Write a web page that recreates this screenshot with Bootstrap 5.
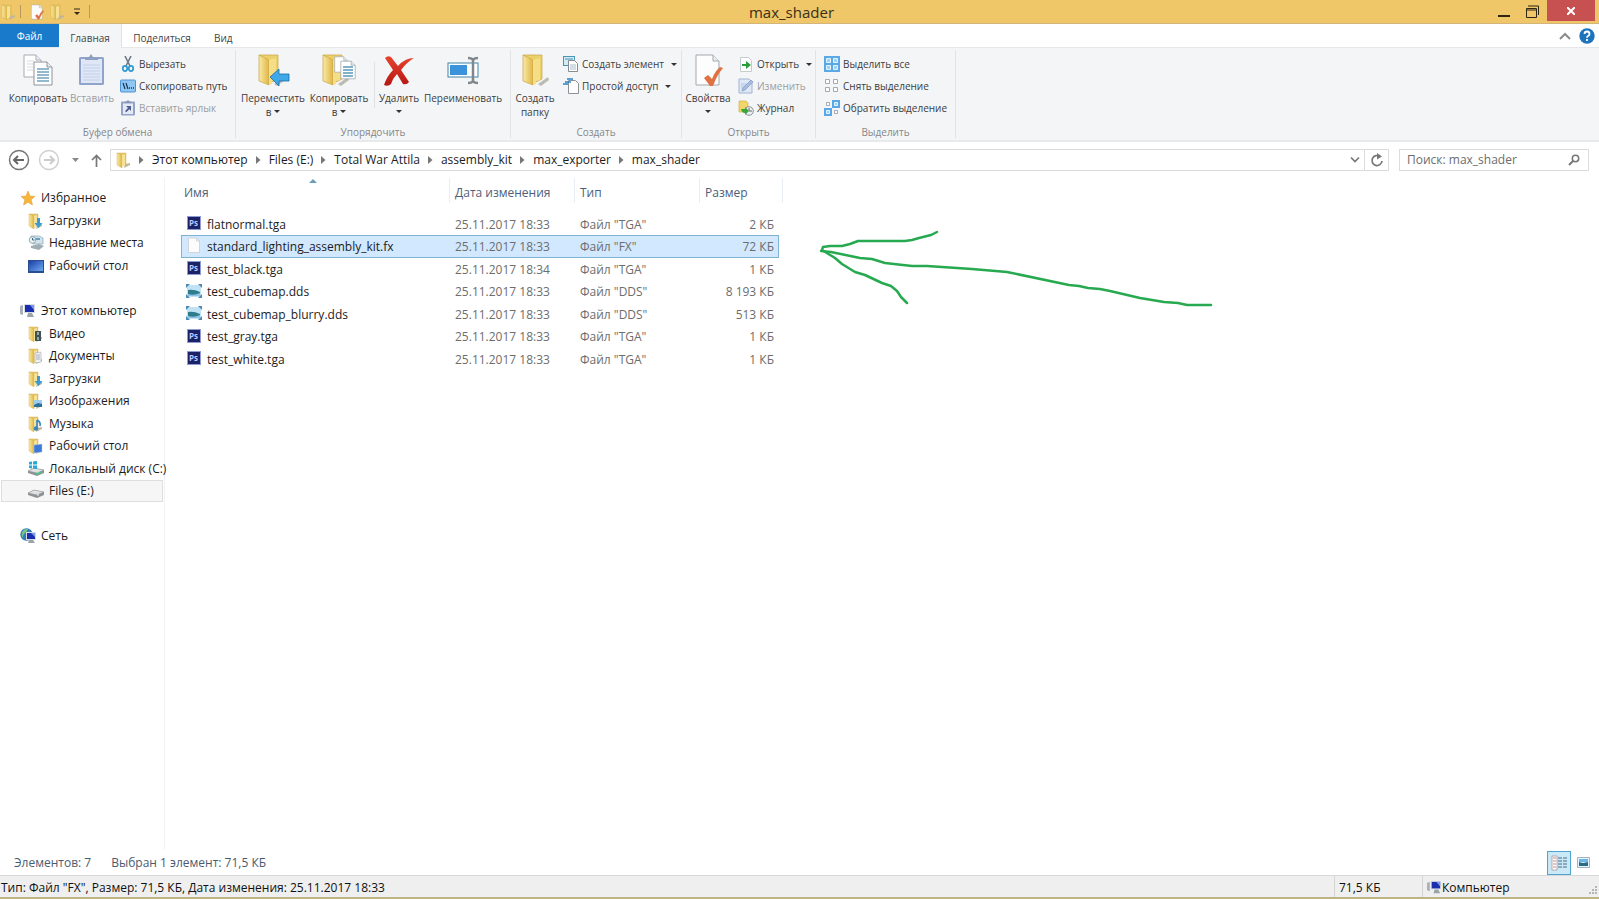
<!DOCTYPE html>
<html lang="ru">
<head>
<meta charset="utf-8">
<meta name="viewport" content="width=device-width, initial-scale=1">
<title>max_shader</title>
<link href="https://cdn.jsdelivr.net/npm/bootstrap@5.3.0/dist/css/bootstrap.min.css" rel="stylesheet">
<style>
body{font-family:"Open Sans","Noto Sans",sans-serif;font-size:12px;line-height:16px;color:#1c1c1c;background:#fff}
button{font-family:inherit}
a{color:inherit;text-decoration:none}
svg{flex:none;display:block}
.i16{width:16px;height:16px}
.i32{width:34px;height:34px}
.titlebar{height:24px;background:#efc768;border-bottom:1px solid #d3b47a}
.titlebar h1{font-size:15px;line-height:24px;color:#3a2f18;margin:0 16px 0 0}
.side{flex:1 1 0}
.qsep{width:1px;height:13px;background:#b79a5b}
.plain{border:0;background:none;padding:0;color:inherit}
.closebtn{width:48px;height:21px;background:#c75050}
.tabs{height:23px}
.tabs a{line-height:22px;font-size:10px;text-align:center;color:#444;padding-top:3px;height:24px}
.tabs .file{width:59px;background:#1979ca;color:#fff;padding-top:1px;height:23px}
.tabs .main{width:63px;background:#f4f5f7;border-right:1px solid #e2e3e5;position:relative}
.ribbon{height:95px;background:#f4f5f7;border-top:1px solid #e6e7e9;border-bottom:2px solid #e8e9eb;font-size:10px;color:#3c3c3c}
.grp{border-right:1px solid #e2e3e5;margin-top:2px;margin-bottom:2px}
.g1{width:236px}.g2{width:275px}.g3{width:171px}.g4{width:134px}.g5{width:140px}
.grp .tools{height:75px;padding-top:3px}
.grp .cap{text-align:center;color:#85878a;line-height:14px}
.big{display:flex;flex-direction:column;align-items:center;line-height:14px;white-space:nowrap}
.big span{margin-top:4px}
.w60{width:60px}.w48{width:48px}.w52{width:52px}.w66{width:66px}.w80{width:80px}
.small-col button{display:flex;align-items:center;height:22px;gap:3px;white-space:nowrap}
.off{color:#9b9da0}
.caret{display:inline-block;border:3px solid transparent;border-top-color:#333;border-bottom:0;vertical-align:3px}
.isep{width:1px;height:46px;background:#e0e1e3;margin:9px 0 0 2px}
.nav-row{height:36px;padding:7px 10px 7px 8px}
.crumbs{height:22px;border:1px solid #dcdcdc}
.crumbs ol{list-style:none}
.refresh{width:24px;border-left:1px solid #dcdcdc;height:20px}
.search{width:190px;height:22px;border:1px solid #dcdcdc;margin-left:10px}
.search input{border:0;outline:0;width:140px;padding:0 0 0 7px;color:#6d6d6d;background:none}
.search input::placeholder{color:#6d6d6d;opacity:1}
.tree{width:165px;border-right:1px solid #f2f2f2;padding-top:9px}
.tree ul{list-style:none;margin:0 0 23px;padding:0}
.tree li,.files tbody tr{height:22px}
.tree li:nth-child(even),.files tbody tr:nth-child(even){height:23px}
.tree a{display:flex;align-items:center;height:100%;gap:5px;padding-left:26px;white-space:nowrap;margin:0 1px;border:1px solid transparent}
.tree a.root{padding-left:18px}
.tree a.cur{background:#f6f6f6;border-color:#dedede}
.pane{position:relative}
.files{table-layout:fixed;width:598px;margin-left:16px;border-collapse:separate;border-spacing:0}
.c-name{width:268px}.c-mid{width:125px}.c-size{width:80px}
.files th{font-weight:400;color:#4c607a;height:25px;padding:4px 0 0 5px;position:relative;border-left:1px solid #e8eef3;line-height:16px}
.files th:first-child{border-left:0;padding-left:3px}
.files thead::after{content:"";display:block;height:10px}
.files th:last-child::after{content:"";position:absolute;right:-4px;top:0;bottom:0;border-right:1px solid #e8eef3}
.files td{padding:1px 0 0 6px;color:#6d6d6d;white-space:nowrap;line-height:16px;vertical-align:middle}
.files td:first-child{padding-left:5px;color:#1c1c1c}
.files td:last-child{padding:1px 5px 0 0;text-align:right}
.files td svg{margin:0 5px 3px 0}
.files .sel td{background:#d1e8ff;border-top:1px solid #7fb3d3;border-bottom:1px solid #7fb3d3}
.files .sel td:first-child{border-left:1px solid #7fb3d3;padding-left:4px}
.files .sel td:last-child{border-right:1px solid #7fb3d3;padding-right:4px}
.files .sel td{padding-top:0}
.sortmark{position:absolute;left:128px;top:1px;border:4px solid transparent;border-bottom-color:#6c9db8;border-top:0}
.arrow{position:absolute;left:635px;top:42px}
.info{height:25px;color:#4a5b70;padding-left:14px}
.viewbtn{width:24px;height:24px}
.viewbtn.on{background:#cbe8f6;border:1px solid #4fa3cf}
.statusbar{height:22px;background:#efefef;border-top:1px solid #d8d8d8;color:#111;padding-left:1px}
.cell{border-left:1px solid #d5d5d5;padding-left:4px}
.cell-size{width:88px}.cell-zone{width:177px}
.task{height:2px;background:#bdb384}
</style>
</head>
<body class="d-flex flex-column vh-100 overflow-hidden">
<svg width="0" height="0" class="position-absolute" aria-hidden="true">
<defs>
<linearGradient id="gy"><stop offset="0" stop-color="#fbeaa2"/><stop offset="1" stop-color="#dfb548"/></linearGradient>
<linearGradient id="gb" x2="1" y2="1"><stop offset="0" stop-color="#1b3fa8"/><stop offset="1" stop-color="#6fa8f0"/></linearGradient>
<linearGradient id="gr" y2="1" x2="0"><stop offset="0" stop-color="#e8432d"/><stop offset="1" stop-color="#b51712"/></linearGradient>
<symbol id="folder" viewBox="0 0 16 16"><path d="M10 12l5-1v2l-6 3z" fill="#c2b79a"/><path d="M2 1h9v11l-4 2z" fill="#e6c765" stroke="#c9a544" stroke-width=".4"/><path d="M2 1l5 2v13l-5-3z" fill="url(#gy)" stroke="#d0ad4c" stroke-width=".4"/><path d="M7 3l3-1v11l-3 2z" fill="#f7e294"/></symbol>
<symbol id="bigfolder" viewBox="0 0 34 34"><path d="M20 31l10-7 1 3-8 6z" fill="#bdbab2"/><path d="M5 2h19v24l-8 4z" fill="#ecd069" stroke="#c9a544" stroke-width=".7"/><path d="M5 2l10 5v25L5 28z" fill="url(#gy)" stroke="#c9a544" stroke-width=".7"/><path d="M15 7l7-2v22l-4 1v3l-3 1z" fill="#f6de86"/></symbol>
<symbol id="sheet" viewBox="0 0 20 24"><path d="M1 1h13l5 5v17H1z" fill="#fff" stroke="#a3a9ae"/><path d="M14 1v5h5" fill="#e9edf0" stroke="#a3a9ae"/></symbol>
<symbol id="copy" viewBox="0 0 34 34"><g fill="#fff" stroke="#a7adb2"><path d="M3 2h12l5 5v17H3z"/><path d="M15 2v5h5" fill="#eef"/></g><path d="M6 8h7M6 11h6M6 14h6M6 17h6" stroke="#d5d9dc"/><g fill="#fff" stroke="#8d949a"><path d="M13 9h13l5 5v18H13z"/><path d="M26 9v5h5" fill="#e9edf0"/></g><path d="M16 16h12M16 19h12M16 22h12M16 25h12M16 28h12" stroke="#6fa3bd" stroke-width="1.4"/></symbol>
<symbol id="paste" viewBox="0 0 34 34"><rect x="4" y="4" width="25" height="28" rx="1.5" fill="#8fa3cc"/><rect x="6" y="6" width="21" height="24" fill="#dfe7f6"/><path d="M8 12h17M8 15h17M8 18h17M8 21h17M8 24h17M8 27h17" stroke="#c2d0ea"/><path d="M10 7V4h4l2-3 2 3h5v3z" fill="#8ea0c0"/></symbol>
<symbol id="cut" viewBox="0 0 16 16"><path d="M5 0l5 10M11 0L6 10" stroke="#6d7a86" stroke-width="1.6"/><ellipse cx="5" cy="12.500" rx="2.200" ry="2.600" fill="none" stroke="#2e9ad0" stroke-width="1.700"/><ellipse cx="11" cy="12.500" rx="2.200" ry="2.600" fill="none" stroke="#2e9ad0" stroke-width="1.700"/></symbol>
<symbol id="path" viewBox="0 0 16 16"><rect x=".5" y="2" width="15" height="12" rx="1" fill="#8fc6f3" stroke="#4e94d6"/><path d="M3 5l2 6M6 5l2 6" stroke="#17365c" stroke-width="1.200"/><path d="M9 10h1M11 10h1M13 10h1" stroke="#17365c" stroke-width="1.500"/></symbol>
<symbol id="link" viewBox="0 0 16 16"><rect x="1" y="1.500" width="14" height="14" rx="1" fill="#94a4c8"/><rect x="3" y="3.500" width="10" height="10.500" fill="#e3e9f5"/><path d="M5 3V1.500h1.500L8 0l1.500 1.500H11V3z" fill="#8795b5"/><path d="M6 6h5v5L9.300 9.300l-3 3-1.300-1.300 3-3z" fill="#4f5e8c"/></symbol>
<symbol id="moveto" viewBox="0 0 34 34"><use href="#bigfolder" width="34" height="34" x="-2"/><path d="M14 24l9-8v5h10v7H23v5z" fill="#3fa9e8" stroke="#1769ab" stroke-width=".8"/></symbol>
<symbol id="copyto" viewBox="0 0 34 34"><use href="#bigfolder" width="34" height="34" x="-4"/><use href="#sheet" x="12" y="2" width="14" height="19"/><use href="#sheet" x="18" y="7" width="16" height="20"/><path d="M21 14h10M21 17h10M21 20h10M21 23h10" stroke="#5a98ba" stroke-width="1.300"/></symbol>
<symbol id="del" viewBox="0 0 34 34"><path d="M3 5q3-3 6-1l7 9q7-8 16-8-7 4-13 12l8 12q-2 3-6 2l-6-10q-4 4-6 10-3 3-7 1 3-9 9-15z" fill="url(#gr)"/></symbol>
<symbol id="ren" viewBox="0 0 34 34"><rect x="2" y="10" width="30" height="14" fill="#fff" stroke="#3e86a8"/><rect x="4" y="12" width="17" height="10" fill="#3b93dc"/><path d="M22 5q4 0 5 2 1-2 5-2M22 30q4 0 5-2 1 2 5 2M27 7v21" stroke="#7f868c" stroke-width="2.500" fill="none"/></symbol>
<symbol id="newitem" viewBox="0 0 16 16"><rect x=".5" y=".5" width="11" height="9" fill="#d4eaf5" stroke="#4a94b5"/><path d="M2 3h8" stroke="#4a94b5"/><path d="M5.500 4.500h6l3 3v8h-9z" fill="#fff" stroke="#848b91"/><path d="M7 9h6M7 11h6M7 13h6" stroke="#a7bccb"/></symbol>
<symbol id="easy" viewBox="0 0 16 16"><path d="M5.500 2.500h7l3 3v10h-10z" fill="#fff" stroke="#8c9298"/><path d="M4 1h6M2 4h6M0 6h5" stroke="#2883c4" stroke-width="1.500"/></symbol>
<symbol id="props" viewBox="0 0 34 34"><path d="M5 2h17l6 6v24H5z" fill="#fdfdfd" stroke="#a3a9ae"/><path d="M22 2v6h6" fill="#e9edf0" stroke="#a3a9ae"/><path d="M13 25l4-3 4 4q3-8 8-12l3 1q-6 7-10 18h-3z" fill="#df7142"/></symbol>
<symbol id="open" viewBox="0 0 16 16"><path d="M2.500 1.500h8l3 3v11h-11z" fill="#fff" stroke="#c5cace"/><path d="M4 8h4V5l5 4-5 4v-3H4z" fill="#2a9d3b"/></symbol>
<symbol id="edit" viewBox="0 0 16 16"><path d="M1 1h10l3 3v11H1z" fill="#dfe8f6" stroke="#9fb4d4"/><path d="M3 6h6M3 8h5M3 10h4" stroke="#b3c4de"/><path d="M4 13l1-3 8-8 2 2-8 8z" fill="#a9bedf" stroke="#7e98c2" stroke-width=".7"/></symbol>
<symbol id="hist" viewBox="0 0 16 16"><path d="M1 1h7l2 2v9H1z" fill="#f3d669" stroke="#c9a838" stroke-width=".6"/><circle cx="11" cy="11" r="4.300" fill="#eef1f3" stroke="#888f95"/><path d="M11 8v3h3" fill="none" stroke="#666"/><path d="M3 9l4 0V7l4 4-4 4v-2q-3 0-4-4z" fill="#37a53a"/></symbol>
<symbol id="selall" viewBox="0 0 16 16"><path d="M0 0h16v16H0z" fill="#5aa9e6"/><path d="M2.500 2.500h4v4h-4zM9.500 2.500h4v4h-4zM2.500 9.500h4v4h-4zM9.500 9.500h4v4h-4z" fill="#9fd0f5" stroke="#e6f4fd"/></symbol>
<symbol id="selnone" viewBox="0 0 16 16"><path d="M1.500 1.500h4v4h-4zM9.500 1.500h4v4h-4zM1.500 9.500h4v4h-4zM9.500 9.500h4v4h-4z" fill="#fff" stroke="#a9a9a9"/></symbol>
<symbol id="selinv" viewBox="0 0 16 16"><path d="M8 0h8v8H8zM0 8h8v8H0z" fill="#5aa9e6"/><path d="M10.500 2.500h3v3h-3zM2.500 10.500h3v3h-3z" fill="#9fd0f5" stroke="#e6f4fd"/><path d="M2.500 2.500h3v3h-3zM10.500 10.500h3v3h-3z" fill="#fff" stroke="#a9a9a9"/></symbol>
<symbol id="star" viewBox="0 0 16 16"><path d="M8 1l2 5 5 .4-3.900 3.400L12.500 15 8 12.200 3.500 15l1.300-5.200L1 6.400 6 6z" fill="#f5b63a" stroke="#dc9430" stroke-width=".5"/></symbol>
<symbol id="dl" viewBox="0 0 16 16"><use href="#folder" width="16" height="16" x="-1"/><path d="M9 5h3v5h2.500L10.500 15l-4-5H9z" fill="#3d9bd3"/></symbol>
<symbol id="recent" viewBox="0 0 16 16"><path d="M3 1h8l4 2v6H5z" fill="#d3e3ec" stroke="#8ba3b1" stroke-width=".7"/><path d="M7 4h5" stroke="#3d87b0" stroke-width="1.500"/><path d="M3 11l8-2 5 2-5 4-8-2z" fill="#9fadb5"/><circle cx="4.500" cy="5" r="3.300" fill="#e8f0f4" stroke="#7b9cac" stroke-width=".8"/><path d="M4.500 3v2h2" stroke="#467" fill="none"/></symbol>
<symbol id="desk" viewBox="0 0 16 16"><path d="M0 2h16v13H0z" fill="#284f8c"/><path d="M1 3h14v10H1z" fill="url(#gb)"/></symbol>
<symbol id="pc" viewBox="0 0 16 16"><path d="M0 3l3-1v10l-3-1z" fill="#a8b0b8"/><path d="M4 1h11v9H4z" fill="#dadde2"/><path d="M5 2h9v7H5z" fill="#1a2fb0"/><path d="M10 2h4v5z" fill="#7c95e8"/><path d="M8 10h4l2 4H7z" fill="#9ba3ab"/></symbol>
<symbol id="video" viewBox="0 0 16 16"><use href="#folder" width="16" height="16" x="-1"/><path d="M7 5h6v10H7z" fill="#454f55"/><path d="M9 6h2v3H9zM9 11h2v3H9z" fill="#7fb59c"/></symbol>
<symbol id="docs" viewBox="0 0 16 16"><use href="#folder" width="16" height="16" x="-1"/><path d="M7 5l6-1v10l-6 1z" fill="#f1f2f5" stroke="#a4a8b0" stroke-width=".6"/><path d="M8 7h4M8 9h4M8 11h4" stroke="#8b94aa" stroke-width=".7"/></symbol>
<symbol id="pics" viewBox="0 0 16 16"><use href="#folder" width="16" height="16" x="-1"/><path d="M6 7h8v7H6z" fill="#9dcdea"/><path d="M6 12l4-2 4 1v3H6z" fill="#2b6f9b"/></symbol>
<symbol id="music" viewBox="0 0 16 16"><use href="#folder" width="16" height="16" x="-1"/><path d="M9 4q4 2 3 6M9 4v8" stroke="#3286c4" stroke-width="1.600" fill="none"/><circle cx="8" cy="12.500" r="2.200" fill="#3286c4"/></symbol>
<symbol id="fdesk" viewBox="0 0 16 16"><use href="#folder" width="16" height="16" x="-1"/><path d="M6 7l8-1v8l-8 1z" fill="#3c78d8" stroke="#bcd" stroke-width=".5"/></symbol>
<symbol id="drive" viewBox="0 0 16 16"><path d="M0 10l6-3 10 2v3l-7 3-9-3z" fill="#8d9296"/><path d="M0 10l6-3 10 2-7 3z" fill="#dfe1e3" stroke="#888" stroke-width=".5"/><circle cx="10" cy="12" r=".8" fill="#fff"/></symbol>
<symbol id="cdrive" viewBox="0 0 16 16"><use href="#drive" width="16" height="16"/><path d="M1 1l3-.5v3H1zM5 .4L9 0v3.500H5zM1 4.500h3v3L1 7zM5 4.500h4V8l-4-.4z" fill="#23a9d8"/><path d="M8 13l6-2" stroke="#4c8" stroke-width="1.500"/></symbol>
<symbol id="net" viewBox="0 0 16 16"><circle cx="6.500" cy="6.500" r="6.200" fill="#2f7fb5"/><path d="M2 4q3-4 6-3-1 3-3 4t-2 5Q1 8 2 4z" fill="#77c38a"/><path d="M6 4h10v8H6z" fill="#d7dbe4"/><path d="M7 5h8v6H7z" fill="#1a2fb0"/><path d="M11 5h4v4z" fill="#7c95e8"/><path d="M9 12h4l2 3H8z" fill="#9ba3ab"/></symbol>
<symbol id="ps" viewBox="0 0 16 16"><path d="M1 1h14v14H1z" fill="#8e9bd4"/><path d="M2 2h12v12H2z" fill="#1b2266"/><text x="3" y="11" font-size="8" font-weight="700" font-family="Open Sans" fill="#b9c8ff">Ps</text></symbol>
<symbol id="blank" viewBox="0 0 16 16"><path d="M2.500 1h8l3 3v11.500h-11z" fill="#fcfcfc" stroke="#c4c8cc" stroke-width=".7"/><path d="M10.500 1v3h3" fill="none" stroke="#c4c8cc" stroke-width=".7"/></symbol>
<symbol id="dds" viewBox="0 0 16 16"><path d="M1 2h14v12H1z" fill="#bfe3f5"/><path d="M2 7q6-1 12 2v3H2z" fill="#2f7d8c"/><path d="M2 11q6 2 12-1v3H2z" fill="#8fc3e3"/><path d="M0 1h4L0 5zM16 1h-4l4 4zM0 15h4l-4-4zM16 15h-4l4-4z" fill="#4d8ab5"/></symbol>
</defs></svg>

<header class="titlebar d-flex flex-shrink-0">
  <div class="side d-flex align-items-center">
    <svg class="i16"><use href="#folder"/></svg>
    <span class="qsep ms-1 me-2"></span>
    <button class="plain" aria-label="Свойства"><svg class="i16" viewBox="0 0 34 34"><use href="#props"/></svg></button>
    <button class="plain ms-1 me-1" aria-label="Новая папка"><svg class="i16"><use href="#folder"/></svg></button>
    <button class="plain" aria-label="Настройка панели"><svg class="ms-1" width="8" height="8" viewBox="0 0 8 8"><path d="M1 1h6" stroke="#332b18"/><path d="M1 4h6L4 7z" fill="#332b18"/></svg></button>
    <span class="qsep ms-2"></span>
  </div>
  <h1 class="fw-normal">max_shader</h1>
  <div class="side d-flex justify-content-end">
    <button class="plain me-3" aria-label="Свернуть"><svg width="12" height="20"><path d="M0 14h12" stroke="#2d2614" stroke-width="2"/></svg></button>
    <button class="plain me-2" aria-label="Восстановить"><svg width="13" height="20"><path d="M.5 6.500h10v9H.5zM1 8h10M2 4h10.500v9" fill="none" stroke="#2d2614"/></svg></button>
    <button class="plain closebtn me-1 d-flex justify-content-center align-items-center" aria-label="Закрыть"><svg width="8" height="8"><path d="M0 0l8 8M8 0L0 8" stroke="#fff" stroke-width="2"/></svg></button>
  </div>
</header>

<nav class="tabs d-flex flex-shrink-0">
  <a href="#" class="file">Файл</a>
  <a href="#" class="main">Главная</a>
  <a href="#" class="w80">Поделиться</a>
  <a href="#" class="px-2 ms-1">Вид</a>
  <div class="ms-auto d-flex align-items-center gap-2 pe-1">
    <button class="plain" aria-label="Свернуть ленту"><svg width="12" height="8"><path d="M1 7l5-5 5 5" fill="none" stroke="#8b8b8b" stroke-width="2"/></svg></button>
    <button class="plain" aria-label="Справка"><svg width="16" height="16" viewBox="0 0 16 16"><circle cx="8" cy="8" r="7.700" fill="#1d74bd"/><path d="M5.500 6q0-2.500 2.500-2.500T10.500 6Q10.500 7.300 9 8q-1 .5-1 1.700M8 11v2" fill="none" stroke="#fff" stroke-width="1.800"/></svg></button>
  </div>
</nav>

<section class="ribbon d-flex flex-shrink-0" aria-label="Лента">
  <div class="grp g1">
    <div class="tools d-flex ps-2">
      <button class="plain big w60"><svg class="i32"><use href="#copy"/></svg><span>Копировать</span></button>
      <button class="plain big w48 off"><svg class="i32"><use href="#paste"/></svg><span>Вставить</span></button>
      <div class="small-col ps-1">
        <button class="plain"><svg class="i16"><use href="#cut"/></svg>Вырезать</button>
        <button class="plain"><svg class="i16"><use href="#path"/></svg>Скопировать путь</button>
        <button class="plain off"><svg class="i16"><use href="#link"/></svg>Вставить ярлык</button>
      </div>
    </div>
    <div class="cap">Буфер обмена</div>
  </div>
  <div class="grp g2">
    <div class="tools d-flex ps-1">
      <button class="plain big w66"><svg class="i32"><use href="#moveto"/></svg><span>Переместить<br>в <i class="caret"></i></span></button>
      <button class="plain big w66"><svg class="i32"><use href="#copyto"/></svg><span>Копировать<br>в <i class="caret"></i></span></button>
      <div class="isep"></div>
      <button class="plain big w48"><svg class="i32"><use href="#del"/></svg><span>Удалить<br><i class="caret"></i></span></button>
      <button class="plain big w80"><svg class="i32"><use href="#ren"/></svg><span>Переименовать</span></button>
    </div>
    <div class="cap">Упорядочить</div>
  </div>
  <div class="grp g3">
    <div class="tools d-flex">
      <button class="plain big w48"><svg class="i32"><use href="#bigfolder"/></svg><span>Создать<br>папку</span></button>
      <div class="small-col ps-1">
        <button class="plain"><svg class="i16"><use href="#newitem"/></svg>Создать элемент <i class="caret ms-1"></i></button>
        <button class="plain"><svg class="i16"><use href="#easy"/></svg>Простой доступ <i class="caret ms-1"></i></button>
      </div>
    </div>
    <div class="cap">Создать</div>
  </div>
  <div class="grp g4">
    <div class="tools d-flex">
      <button class="plain big w52"><svg class="i32"><use href="#props"/></svg><span>Свойства<br><i class="caret"></i></span></button>
      <div class="small-col ps-1">
        <button class="plain"><svg class="i16"><use href="#open"/></svg>Открыть <i class="caret ms-1"></i></button>
        <button class="plain off"><svg class="i16"><use href="#edit"/></svg>Изменить</button>
        <button class="plain"><svg class="i16"><use href="#hist"/></svg>Журнал</button>
      </div>
    </div>
    <div class="cap">Открыть</div>
  </div>
  <div class="grp g5">
    <div class="tools d-flex">
      <div class="small-col ps-2">
        <button class="plain"><svg class="i16"><use href="#selall"/></svg>Выделить все</button>
        <button class="plain"><svg class="i16"><use href="#selnone"/></svg>Снять выделение</button>
        <button class="plain"><svg class="i16"><use href="#selinv"/></svg>Обратить выделение</button>
      </div>
    </div>
    <div class="cap">Выделить</div>
  </div>
</section>

<div class="nav-row d-flex align-items-center flex-shrink-0">
  <button class="plain" aria-label="Назад"><svg width="22" height="22"><circle cx="11" cy="11" r="9.500" fill="none" stroke="#777" stroke-width="1.500"/><path d="M6 11h10M10 7l-4 4 4 4" fill="none" stroke="#666" stroke-width="2"/></svg></button>
  <button class="plain ms-2" aria-label="Вперёд"><svg width="22" height="22"><circle cx="11" cy="11" r="9.500" fill="none" stroke="#d0d0d0" stroke-width="1.500"/><path d="M6 11h10M12 7l4 4-4 4" fill="none" stroke="#ccc" stroke-width="2"/></svg></button>
  <button class="plain ms-2 ps-1" aria-label="Журнал переходов"><svg width="7" height="4"><path d="M0 0h7L3.500 4z" fill="#888"/></svg></button>
  <button class="plain ms-2 ps-1 me-2" aria-label="Вверх"><svg width="11" height="13"><path d="M5.500 13V2M1 6l4.500-4.500L10 6" fill="none" stroke="#777" stroke-width="1.700"/></svg></button>
  <div class="crumbs d-flex align-items-center flex-grow-1">
    <svg class="i16 ms-1"><use href="#folder"/></svg>
    <ol class="d-flex m-0 p-0" id="crumbs"></ol>
    <button class="plain ms-auto me-1" aria-label="Список"><svg width="10" height="8"><path d="M1 1.500l4 4 4-4" fill="none" stroke="#777" stroke-width="1.700"/></svg></button>
    <button class="plain refresh d-flex justify-content-center align-items-center" aria-label="Обновить"><svg width="14" height="14"><path d="M10 3.500A5 5 0 1 0 12 8" fill="none" stroke="#777" stroke-width="1.700"/><path d="M7 0l5 3.500-5 3z" fill="#777"/></svg></button>
  </div>
  <div class="search d-flex align-items-center">
    <input type="text" class="flex-grow-1" aria-label="Поиск" placeholder="Поиск: max_shader">
    <svg class="me-2" width="12" height="12"><circle cx="7.500" cy="4.500" r="3.200" fill="none" stroke="#777" stroke-width="1.500"/><path d="M5 7l-4 4" stroke="#777" stroke-width="2"/></svg>
  </div>
</div>

<main class="d-flex flex-grow-1 overflow-hidden">
  <nav class="tree flex-shrink-0">
    <ul>
      <li><a href="#" class="root"><svg class="i16"><use href="#star"/></svg>Избранное</a></li>
      <li><a href="#"><svg class="i16"><use href="#dl"/></svg>Загрузки</a></li>
      <li><a href="#"><svg class="i16"><use href="#recent"/></svg>Недавние места</a></li>
      <li><a href="#"><svg class="i16"><use href="#desk"/></svg>Рабочий стол</a></li>
    </ul>
    <ul>
      <li><a href="#" class="root"><svg class="i16"><use href="#pc"/></svg>Этот компьютер</a></li>
      <li><a href="#"><svg class="i16"><use href="#video"/></svg>Видео</a></li>
      <li><a href="#"><svg class="i16"><use href="#docs"/></svg>Документы</a></li>
      <li><a href="#"><svg class="i16"><use href="#dl"/></svg>Загрузки</a></li>
      <li><a href="#"><svg class="i16"><use href="#pics"/></svg>Изображения</a></li>
      <li><a href="#"><svg class="i16"><use href="#music"/></svg>Музыка</a></li>
      <li><a href="#"><svg class="i16"><use href="#fdesk"/></svg>Рабочий стол</a></li>
      <li><a href="#"><svg class="i16"><use href="#cdrive"/></svg>Локальный диск (C:)</a></li>
      <li><a href="#" class="cur"><svg class="i16"><use href="#drive"/></svg>Files (E:)</a></li>
    </ul>
    <ul>
      <li><a href="#" class="root"><svg class="i16"><use href="#net"/></svg>Сеть</a></li>
    </ul>
  </nav>
  <section class="pane flex-grow-1">
    <table class="files">
      <colgroup><col class="c-name"><col class="c-mid"><col class="c-mid"><col class="c-size"></colgroup>
      <thead><tr><th>Имя<i class="sortmark"></i></th><th>Дата изменения</th><th>Тип</th><th>Размер</th></tr></thead>
      <tbody id="rows"></tbody>
    </table>
    <svg class="arrow" width="430" height="100" fill="none" stroke="#27a94f" stroke-width="2.500" stroke-linecap="round" stroke-linejoin="round"><path d="M411 85h-24l-9-2-14-1-24-4-30-7-10-2-12-1-9-2-10-1-62-13-35-3-45-3-15 0-27-3-13-4-12-1-29-6-10-1"/><path d="M137 12l-6 3-12 3-7 2-7 1H58l-8 3-8 2H30l-7 1-1 3 13 8 7 6 13 8 10 3 17 8 9 3 6 5 4 6 6 6"/></svg>
  </section>
</main>

<div class="info d-flex align-items-center flex-shrink-0">
  <span>Элементов: 7</span><span class="ms-3 ps-1">Выбран 1 элемент: 71,5 КБ</span>
  <div class="ms-auto d-flex align-items-center pe-1">
    <button class="plain viewbtn on d-flex justify-content-center align-items-center" aria-label="Таблица"><svg width="16" height="16"><path d="M1 1h5v14H1z" fill="#fff" stroke="#a99" stroke-width=".8"/><path d="M2 3h3M2 6h3M2 9h3M2 12h3" stroke="#c88"/><path d="M7 3h4M12 3h4M7 6h4M12 6h4M7 9h4M12 9h4M7 12h4M12 12h4" stroke="#4a6a8c"/></svg></button>
    <button class="plain viewbtn d-flex justify-content-center align-items-center" aria-label="Эскизы"><svg width="13" height="12"><path d="M.5.5h12v10H.5z" fill="#e8f4fb" stroke="#9fb3c0"/><path d="M2 2h9v3H2z" fill="#6bb6e6"/><path d="M2 5l4 1 5-1v4H2z" fill="#276c84"/></svg></button>
  </div>
</div>
<footer class="statusbar d-flex flex-shrink-0">
  <span class="flex-grow-1 pt-1">Тип: Файл "FX", Размер: 71,5 КБ, Дата изменения: 25.11.2017 18:33</span>
  <span class="cell cell-size pt-1">71,5 КБ</span>
  <span class="cell cell-zone d-flex pt-1"><svg viewBox="0 0 16 16" width="15" height="15"><use href="#pc"/></svg>Компьютер
    <svg class="ms-auto align-self-end" width="12" height="12"><path d="M8 2h2M8 5h2M8 8h2M5 5h2M5 8h2M2 8h2" stroke="#b5b5b5" stroke-width="2"/></svg></span>
</footer>
<div class="task flex-shrink-0"></div>

<script>
const path = ['Этот компьютер','Files (E:)','Total War Attila','assembly_kit','max_exporter','max_shader'];
document.getElementById('crumbs').innerHTML = path.map(p =>
  `<li class="d-flex align-items-center"><svg class="mx-2" width="5" height="8"><path d="M0 0l4.500 4L0 8z" fill="#777"/></svg><a href="#">${p}</a></li>`).join('');
const files = [
  ['ps','flatnormal.tga','33','TGA','2'],
  ['blank','standard_lighting_assembly_kit.fx','33','FX','72'],
  ['ps','test_black.tga','34','TGA','1'],
  ['dds','test_cubemap.dds','33','DDS','8 193'],
  ['dds','test_cubemap_blurry.dds','33','DDS','513'],
  ['ps','test_gray.tga','33','TGA','1'],
  ['ps','test_white.tga','33','TGA','1']];
document.getElementById('rows').innerHTML = files.map((f,i) =>
  `<tr class="${i===1?'sel':''}"><td><div class="d-flex align-items-center"><svg class="i16"><use href="#${f[0]}"/></svg>${f[1]}</div></td><td>25.11.2017 18:${f[2]}</td><td>Файл "${f[3]}"</td><td>${f[4]} КБ</td></tr>`).join('');
</script>
<script src="https://cdn.jsdelivr.net/npm/bootstrap@5.3.0/dist/js/bootstrap.bundle.min.js"></script>
</body>
</html>
